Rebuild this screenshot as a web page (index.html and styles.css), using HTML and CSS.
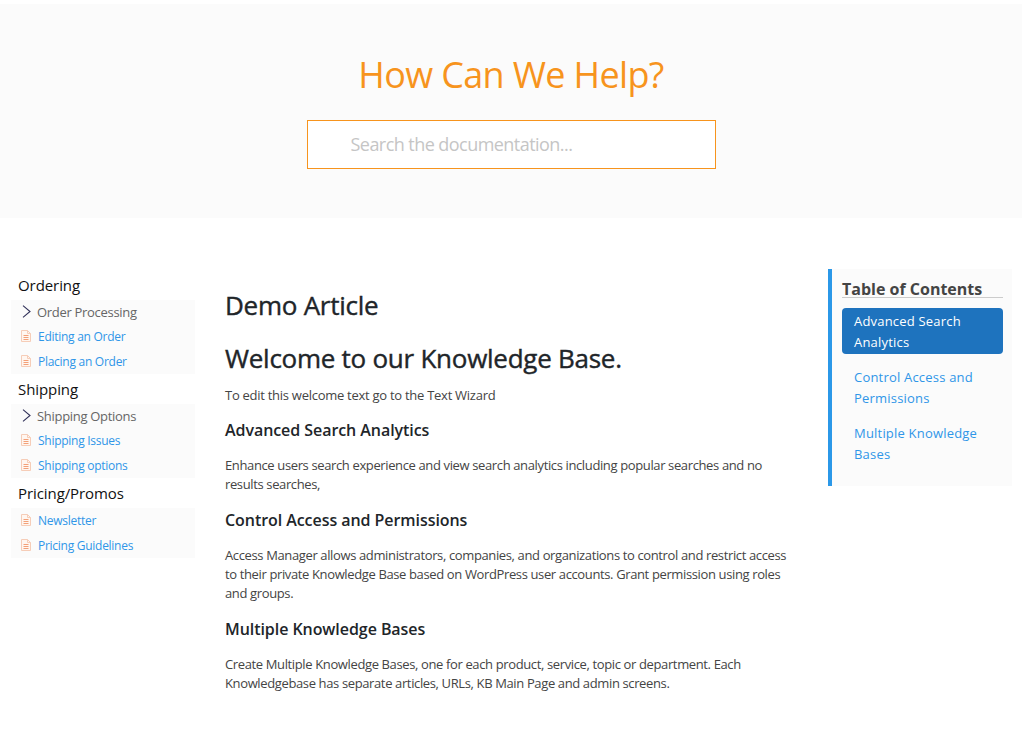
FILE: index.html
```html
<!DOCTYPE html>
<html lang="en">
<head>
<meta charset="utf-8">
<title>Demo Article</title>
<link rel="stylesheet" href="styles.css">
</head>
<body>
<svg class="sprite" aria-hidden="true">
  <symbol id="doc" viewBox="0 0 10 12"><path d="M.5.5h6l3 3v8h-9z" fill="#fff6f0" stroke="#f6cdb8"/><path d="M6.5.5v3h3" fill="none" stroke="#f6cdb8"/><path d="M2.5 5.500h5M2.500 7.500h5M2.500 9.500h5" stroke="#f3a078"/></symbol>
  <symbol id="chev" viewBox="0 0 9 13"><path d="M1 .7 8 6.500 1 12.300" fill="none" stroke="#303058" stroke-width="1.1"/></symbol>
</svg>
<header class="hero">
  <h1 class="hero-title">How Can We Help?</h1>
  <input class="search" type="text" placeholder="Search the documentation...">
</header>
<div class="layout">
  <nav class="sidebar">
    <h2 class="cat">Ordering</h2>
    <div class="group">
      <div class="sub"><svg class="chev"><use href="#chev"/></svg><span>Order Processing</span></div>
      <a class="item"><svg class="doc"><use href="#doc"/></svg><span>Editing an Order</span></a>
      <a class="item"><svg class="doc"><use href="#doc"/></svg><span>Placing an Order</span></a>
    </div>
    <h2 class="cat">Shipping</h2>
    <div class="group">
      <div class="sub"><svg class="chev"><use href="#chev"/></svg><span>Shipping Options</span></div>
      <a class="item"><svg class="doc"><use href="#doc"/></svg><span>Shipping Issues</span></a>
      <a class="item"><svg class="doc"><use href="#doc"/></svg><span>Shipping options</span></a>
    </div>
    <h2 class="cat">Pricing/Promos</h2>
    <div class="group flat">
      <a class="item"><svg class="doc"><use href="#doc"/></svg><span>Newsletter</span></a>
      <a class="item"><svg class="doc"><use href="#doc"/></svg><span>Pricing Guidelines</span></a>
    </div>
  </nav>
  <main class="article">
    <h1 class="title">Demo Article</h1>
    <h2 class="welcome">Welcome to our Knowledge Base.</h2>
    <p class="text intro">To edit this welcome text go to the Text Wizard</p>
    <h3 class="section">Advanced Search Analytics</h3>
    <p class="text">Enhance users search experience and view search analytics including popular searches and no<br>results searches,</p>
    <h3 class="section">Control Access and Permissions</h3>
    <p class="text">Access Manager allows administrators, companies, and organizations to control and restrict access<br>to their private Knowledge Base based on WordPress user accounts. Grant permission using roles<br>and groups.</p>
    <h3 class="section">Multiple Knowledge Bases</h3>
    <p class="text">Create Multiple Knowledge Bases, one for each product, service, topic or department. Each<br>Knowledgebase has separate articles, URLs, KB Main Page and admin screens.</p>
  </main>
  <aside class="toc">
    <h2 class="toc-title">Table of Contents</h2>
    <a class="toc-link active">Advanced Search<br>Analytics</a>
    <a class="toc-link">Control Access and<br>Permissions</a>
    <a class="toc-link">Multiple Knowledge<br>Bases</a>
  </aside>
</div>
</body>
</html>
```
FILE: styles.css
```css
* { box-sizing: border-box; }
body { margin: 0; padding-top: 4px; height: 751px; overflow: hidden; background: #fff; font-family: "Open Sans", "Noto Sans", sans-serif; color: #212529; white-space: nowrap; }
h1, h2, h3, p { margin: 0; font-weight: 400; }
.sprite { display: none; }
.hero { width: 1022px; height: 214px; background: #fbfbfb; display: flex; flex-direction: column; align-items: center; padding-top: 44px; }
.hero-title { font-size: 36px; line-height: 54px; color: #f7941d; letter-spacing: -0.65px; }
.search { width: 409px; height: 49px; margin-top: 18px; border: 1px solid #f7941d; border-radius: 0; background: #fff; padding: 0 43px 2px; font: 18px "Open Sans", sans-serif; letter-spacing: -0.55px; outline: 0; }
.search::placeholder { color: #c5c5c5; opacity: 1; }
.layout { display: grid; grid-template-columns: 184px 569px 184px; align-items: start; padding: 51px 0 0 11px; }
.sidebar { padding-top: 3px; }
.cat { font-size: 15px; line-height: 27px; height: 28px; padding-left: 7px; letter-spacing: -0.08px; color: #111; }
.group { background: #fbfbfb; margin-bottom: 2px; }
.sub, .item { display: flex; align-items: center; height: 25px; }
.sub { height: 24px; padding-left: 11px; font-size: 13px; letter-spacing: -0.3px; color: #666; }
.chev { width: 9px; height: 13px; margin: -2px 6px 0 0; }
.item { padding-left: 10px; font-size: 12px; letter-spacing: -0.27px; color: #2f96e8; }
.doc { width: 10px; height: 12px; margin: -1px 7px 0 0; }
.article { margin-left: 30px; padding-top: 17px; }
.title, .welcome { font-size: 26px; line-height: 38px; letter-spacing: -0.26px; -webkit-text-stroke: 0.4px #212529; }
.welcome { margin-top: 15px; }
.text { font-size: 13px; line-height: 19px; color: #444; letter-spacing: -0.37px; margin-top: 9px; }
.intro { letter-spacing: -0.27px; }
.section { font-size: 16px; line-height: 24px; font-weight: 600; margin-top: 14px; letter-spacing: -0.06px; }
.intro + .section { margin-top: 13px; }
.section + .text { margin-top: 14px; }
.toc { margin-left: 64px; width: 184px; height: 217px; border-left: 4px solid #2b98e8; background: #fbfbfb; padding: 10px 9px 0 10px; }
.toc-title { font-size: 16px; line-height: 20px; height: 19px; font-weight: 700; color: #444; border-bottom: 1px solid #ccc; letter-spacing: 0; margin-bottom: 10px; }
.toc-link { display: block; height: 46px; padding: 3px 12px 0; margin-bottom: 10px; border-radius: 4px; font-size: 13px; line-height: 21px; letter-spacing: 0.2px; color: #2f96e8; }
.active { background: #1e73be; color: #fff; }
```
